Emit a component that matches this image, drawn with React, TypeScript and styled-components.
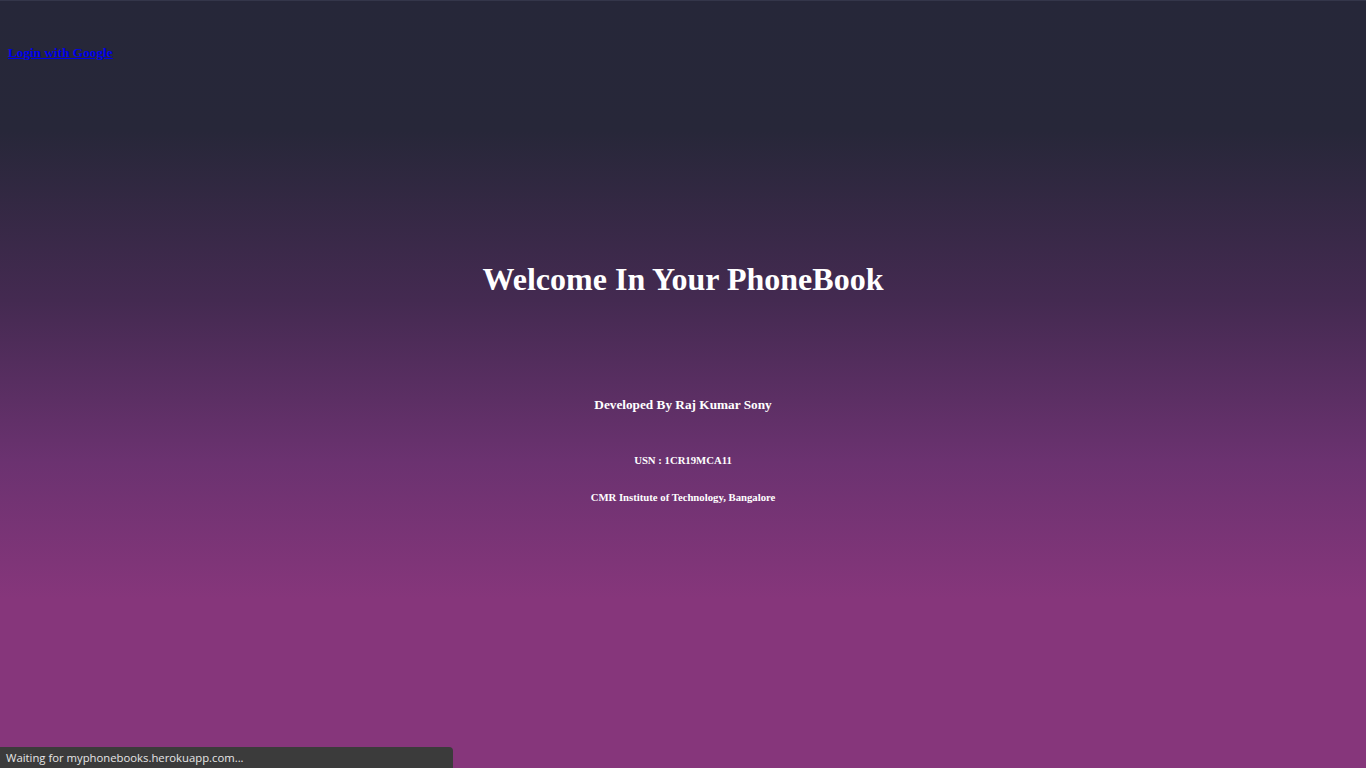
import React from "react";
import styled, { createGlobalStyle } from "styled-components";

const Global = createGlobalStyle`
  html, body { margin: 0; padding: 0; height: 100%; }
  body { font-family: "Liberation Serif", "Times New Roman", serif; }
  #root { min-height: 100vh; }
`;

const Page = styled.div`
  min-height: 100vh;
  box-sizing: border-box;
  padding: 0 8px;
  display: flex;
  flex-direction: column;
  background: linear-gradient(
    to bottom,
    #262739 0%,
    #272739 17%,
    #442a51 39%,
    #6b3270 60%,
    #86367b 78%,
    #86367b 100%
  );
  border-top: 1px solid #34364a;
`;

const TopBar = styled.h5`
  margin: 44px 0 0;
  font-size: 13.28px;
  line-height: 15px;
  font-weight: bold;
`;

const GoogleLink = styled.a`
  color: #0000ee;
  text-decoration: underline;
`;

const Main = styled.main`
  display: flex;
  flex-direction: column;
  align-items: center;
  color: #ffffff;
  text-align: center;
`;

const Title = styled.h1`
  margin: 201px 0 0;
  font-size: 32px;
  line-height: 37px;
  font-weight: bold;
`;

const Line = styled.p<{ $size: number; $gap: number; $lh: number }>`
  margin: ${(p) => p.$gap}px 0 0;
  font-size: ${(p) => p.$size}px;
  line-height: ${(p) => p.$lh}px;
  font-weight: bold;
`;

const StatusBar = styled.div`
  position: fixed;
  left: 0;
  bottom: 0;
  width: 453px;
  height: 21px;
  box-sizing: border-box;
  padding: 0 6px;
  background: #3b3b3b;
  border-top-right-radius: 4px;
  color: #e6e6e6;
  font-family: "Open Sans", "Noto Sans", sans-serif;
  font-size: 11.3px;
  line-height: 21px;
  white-space: nowrap;
`;

export default function App() {
  return (
    <>
      <Global />
      <Page>
        <TopBar>
          <GoogleLink href="#">Login with Google</GoogleLink>
        </TopBar>
        <Main>
          <Title>Welcome In Your PhoneBook</Title>
          <Line $size={13.28} $lh={15} $gap={99}>Developed By Raj Kumar Sony</Line>
          <Line $size={10.72} $lh={13} $gap={42}>USN : 1CR19MCA11</Line>
          <Line $size={10.72} $lh={12} $gap={24}>CMR Institute of Technology, Bangalore</Line>
        </Main>
      </Page>
      <StatusBar>Waiting for myphonebooks.herokuapp.com...</StatusBar>
    </>
  );
}
